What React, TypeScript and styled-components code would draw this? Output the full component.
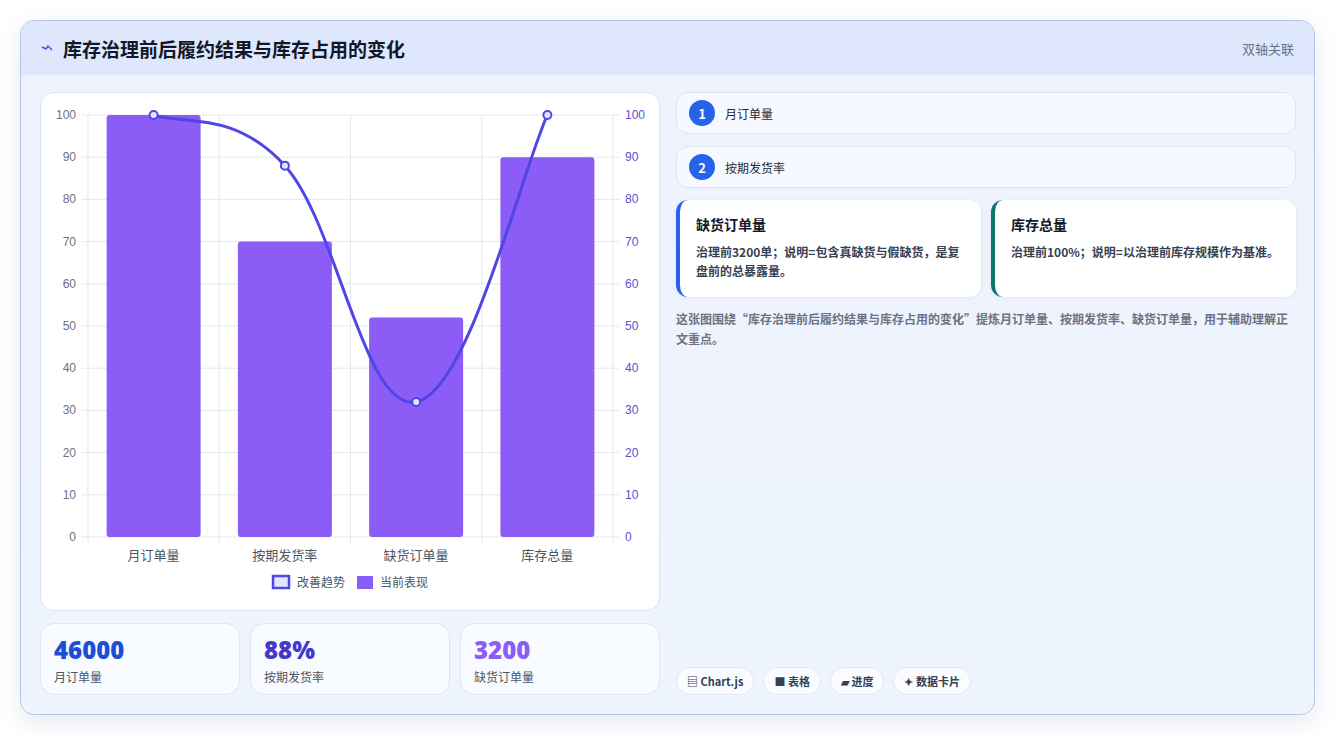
import React from "react";
import styled, { createGlobalStyle } from "styled-components";

const Global = createGlobalStyle`
  body { margin: 0; background: #fff; font-family: "Noto Sans CJK SC", "Noto Sans", sans-serif; }
`;

const Page = styled.div`
  padding: 20px 20px 20px 20px;
  width: 1336px;
  box-sizing: border-box;
`;

const Card = styled.div`
  width: 1295px;
  height: 695px;
  box-sizing: border-box;
  border: 1px solid #b7c4ec;
  border-radius: 14px;
  background: linear-gradient(180deg, #eef2fd 0%, #eef5ff 100%);
  box-shadow: 0 8px 24px rgba(60, 80, 140, 0.12);
  overflow: hidden;
  display: flex;
  flex-direction: column;
`;

const Header = styled.div`
  height: 55px;
  background: #dfe7fd;
  display: flex;
  align-items: center;
  justify-content: space-between;
  padding: 0 20px;
`;

const Title = styled.h1`
  margin: 0;
  font-size: 19px;
  font-weight: 700;
  color: #111827;
  display: flex;
  align-items: center;
  gap: 10px;
`;

const HeaderTag = styled.span`
  font-size: 13px;
  color: #64748b;
`;

const Body = styled.div`
  flex: 1;
  display: grid;
  grid-template-columns: 620px 620px;
  gap: 16px;
  padding: 17px 19px 19px 19px;
`;

const LeftCol = styled.div`
  display: flex;
  flex-direction: column;
  gap: 12px;
`;

const ChartCard = styled.div`
  height: 519px;
  background: #fff;
  border: 1px solid #dde5f3;
  border-radius: 14px;
  box-sizing: border-box;
`;

const Stats = styled.div`
  display: grid;
  grid-template-columns: repeat(3, 1fr);
  gap: 10px;
`;

const Stat = styled.div`
  height: 72px;
  box-sizing: border-box;
  background: #f8fbff;
  border: 1px solid #dde5f3;
  border-radius: 14px;
  padding: 10px 13px;
`;

const StatValue = styled.div<{ $c: string }>`
  font-family: "Open Sans", "Noto Sans", sans-serif;
  font-size: 24px;
  font-weight: 800;
  line-height: 32px;
  color: ${(p) => p.$c};
`;

const StatLabel = styled.div`
  font-size: 12px;
  color: #4b5563;
  margin-top: 2px;
`;

const RightCol = styled.div`
  display: flex;
  flex-direction: column;
`;

const Step = styled.div`
  height: 42px;
  box-sizing: border-box;
  background: #f6f9ff;
  border: 1px solid #dce5f6;
  border-radius: 12px;
  display: flex;
  align-items: center;
  gap: 10px;
  padding: 0 12px;
  margin-bottom: 12px;
  font-size: 12px;
  color: #1f2937;
`;

const Num = styled.span`
  width: 26px;
  height: 26px;
  border-radius: 50%;
  background: #2563eb;
  color: #fff;
  font-size: 13px;
  font-weight: 700;
  display: flex;
  align-items: center;
  justify-content: center;
`;

const Notes = styled.div`
  display: grid;
  grid-template-columns: 1fr 1fr;
  gap: 10px;
`;

const Note = styled.div<{ $c: string }>`
  height: 97px;
  box-sizing: border-box;
  background: #fff;
  border-radius: 12px;
  border-left: 4px solid ${(p) => p.$c};
  box-shadow: 0 1px 4px rgba(60, 80, 140, 0.08);
  padding: 14px 16px;
`;

const NoteTitle = styled.div`
  font-size: 14px;
  font-weight: 700;
  color: #111827;
  margin-bottom: 8px;
`;

const NoteText = styled.div`
  font-size: 12px;
  font-weight: 700;
  line-height: 19px;
  color: #374151;
`;

const Para = styled.p`
  margin: 12px 0 0;
  font-size: 12px;
  font-weight: 700;
  line-height: 20px;
  color: #6b7280;
  flex: 1;
`;

const Tags = styled.div`
  display: flex;
  gap: 9px;
`;

const Tag = styled.span`
  height: 28px;
  padding: 0 10px;
  border-radius: 14px;
  background: #fafcff;
  border: 1px solid #e2e8f0;
  font-size: 11px;
  font-weight: 700;
  color: #334155;
  display: flex;
  align-items: center;
  gap: 4px;
  box-sizing: border-box;
`;

const cats = ["月订单量", "按期发货率", "缺货订单量", "库存总量"];
const bars = [100, 70, 52, 90];
const line = [100, 88, 32, 100];
const X0 = 47, X1 = 572, Y0 = 444, Y1 = 22;
const cw = (X1 - X0) / 4;
const cx = (i: number) => X0 + cw * (i + 0.5);
const vy = (v: number) => Y0 - (v / 100) * (Y0 - Y1);

function curvePath() {
  const pts = line.map((v, i) => [cx(i), vy(v)]);
  let d = `M${pts[0][0]},${pts[0][1]}`;
  for (let i = 0; i < pts.length - 1; i++) {
    const p0 = pts[i - 1] || pts[i];
    const p1 = pts[i];
    const p2 = pts[i + 1];
    const p3 = pts[i + 2] || p2;
    const t = 0.4 / 2;
    const c1 = [p1[0] + (p2[0] - p0[0]) * t, p1[1] + (p2[1] - p0[1]) * t];
    const c2 = [p2[0] - (p3[0] - p1[0]) * t, p2[1] - (p3[1] - p1[1]) * t];
    d += ` C${c1[0]},${c1[1]} ${c2[0]},${c2[1]} ${p2[0]},${p2[1]}`;
  }
  return d;
}

const Chart = () => {
  const ticks = [0, 10, 20, 30, 40, 50, 60, 70, 80, 90, 100];
  return (
    <svg width="618" height="517" style={{ display: "block" }} fontFamily="Liberation Sans, Arial, sans-serif">
      {ticks.map((t) => (
        <g key={t}>
          <line x1={X0 - 6} x2={X1 + 6} y1={vy(t)} y2={vy(t)} stroke="#e5e7eb" />
          <text x={X0 - 12} y={vy(t) + 4} fontSize="12" fill="#6b7280" textAnchor="end">{t}</text>
          <text x={X1 + 12} y={vy(t) + 4} fontSize="12" fill="#5b4fd6">{t}</text>
        </g>
      ))}
      {[0, 1, 2, 3, 4].map((i) => (
        <line key={i} x1={X0 + cw * i} x2={X0 + cw * i} y1={Y1} y2={Y0 + 6} stroke="#e5e7eb" />
      ))}
      {bars.map((v, i) => (
        <rect key={i} x={cx(i) - 47} y={vy(v)} width="94" height={Y0 - vy(v)} rx="3" fill="#8b5cf6" />
      ))}
      <path d={curvePath()} fill="none" stroke="#4f46e5" strokeWidth="3" />
      {line.map((v, i) => (
        <circle key={i} cx={cx(i)} cy={vy(v)} r="4" fill="#e0e7ff" stroke="#4f46e5" strokeWidth="2" />
      ))}
      {cats.map((c, i) => (
        <text key={c} x={cx(i)} y="467" fontSize="13" fill="#4b5563" textAnchor="middle" fontFamily="Noto Sans CJK SC, sans-serif">{c}</text>
      ))}
      <rect x="232" y="483" width="16" height="12" fill="#e0e7ff" stroke="#4f46e5" strokeWidth="2.5" />
      <text x="256" y="494" fontSize="12" fill="#4b5563" fontFamily="Noto Sans CJK SC, sans-serif">改善趋势</text>
      <rect x="316" y="483" width="16" height="13" fill="#8b5cf6" />
      <text x="339" y="494" fontSize="12" fill="#4b5563" fontFamily="Noto Sans CJK SC, sans-serif">当前表现</text>
    </svg>
  );
};

export default function App() {
  return (
    <Page>
      <Global />
      <Card>
        <Header>
          <Title>
            <svg width="12" height="10" viewBox="0 0 12 10">
              <path d="M1 4 L5 6 L7 3 L11 7" fill="none" stroke="#4f46e5" strokeWidth="1.4" />
            </svg>
            库存治理前后履约结果与库存占用的变化
          </Title>
          <HeaderTag>双轴关联</HeaderTag>
        </Header>
        <Body>
          <LeftCol>
            <ChartCard>
              <Chart />
            </ChartCard>
            <Stats>
              <Stat><StatValue $c="#1d4ed8">46000</StatValue><StatLabel>月订单量</StatLabel></Stat>
              <Stat><StatValue $c="#4338ca">88%</StatValue><StatLabel>按期发货率</StatLabel></Stat>
              <Stat><StatValue $c="#8b5cf6">3200</StatValue><StatLabel>缺货订单量</StatLabel></Stat>
            </Stats>
          </LeftCol>
          <RightCol>
            <Step><Num>1</Num>月订单量</Step>
            <Step><Num>2</Num>按期发货率</Step>
            <Notes>
              <Note $c="#2563eb">
                <NoteTitle>缺货订单量</NoteTitle>
                <NoteText>治理前3200单；说明=包含真缺货与假缺货，是复盘前的总暴露量。</NoteText>
              </Note>
              <Note $c="#0f766e">
                <NoteTitle>库存总量</NoteTitle>
                <NoteText>治理前100%；说明=以治理前库存规模作为基准。</NoteText>
              </Note>
            </Notes>
            <Para>这张图围绕“库存治理前后履约结果与库存占用的变化”提炼月订单量、按期发货率、缺货订单量，用于辅助理解正文重点。</Para>
            <Tags>
              <Tag>▤ Chart.js</Tag>
              <Tag>■ 表格</Tag>
              <Tag>▰ 进度</Tag>
              <Tag>✦ 数据卡片</Tag>
            </Tags>
          </RightCol>
        </Body>
      </Card>
    </Page>
  );
}
